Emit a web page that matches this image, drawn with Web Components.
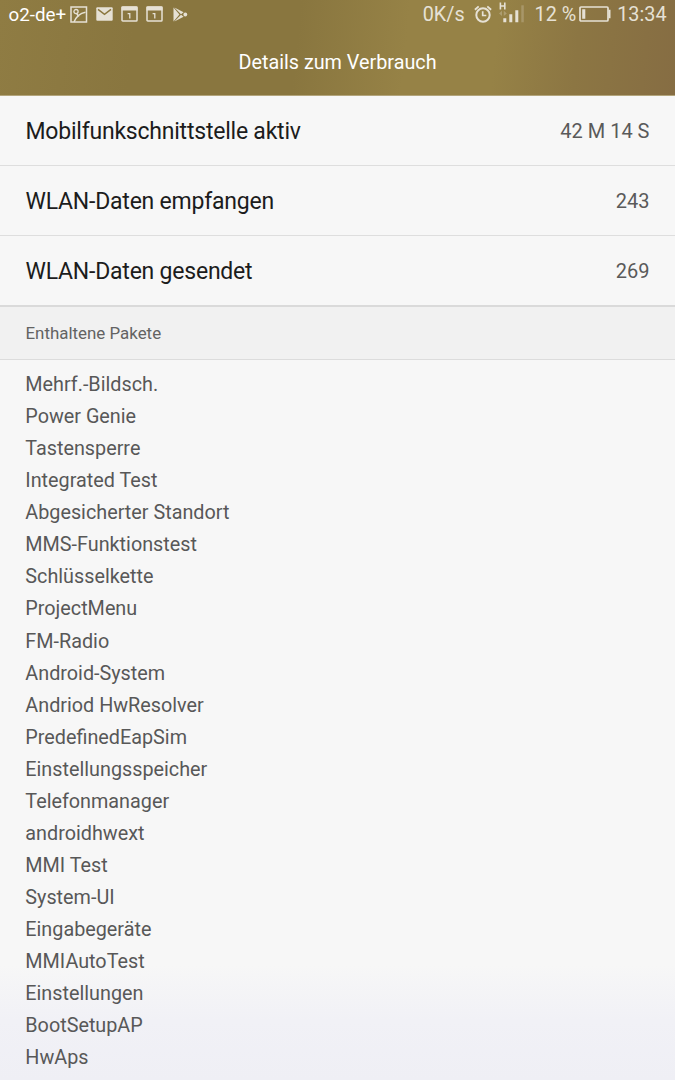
<!DOCTYPE html>
<html lang="de">
<head>
<meta charset="utf-8">
<title>Details zum Verbrauch</title>
<style>
  body {
    margin: 0;
    height: 1080px;
    overflow: hidden;
    font-family: Roboto, "Liberation Sans", sans-serif;
    background: linear-gradient(#f7f7f7 0, #f7f7f7 965px, #f1f1f6 1020px, #efeff5 1080px);
  }
</style>
</head>
<body>
<usage-screen></usage-screen>

<script>
const ICONS = {
  picture: {
    size: [18, 17],
    svg: `<rect x="1" y="1" width="15.5" height="15" fill="none" stroke-width="1.5"/>
      <circle cx="6" cy="5.6" r="2.1" fill="none" stroke-width="1.3"/>
      <path d="M4 16C6 11 9.5 7.3 15.5 6.2M6.8 7.7L8.8 10.6" fill="none" stroke-width="1.5"/>`,
  },
  mail: {
    size: [17, 14],
    svg: `<rect x=".3" y=".3" width="16.4" height="13.4" rx="1" stroke="none"/>
      <path d="M2 2.4L8.5 7.4L15 2.4" fill="none" stroke="#8b783f" stroke-width="1.5"/>`,
  },
  calendar: {
    size: [17, 16],
    svg: `<rect x="1" y="1" width="15" height="14" rx=".8" fill="none" stroke-width="1.5"/>
      <path d="M.5 .5h16v4H.5z" stroke="none"/>
      <path d="M6.6 7.7H8.8V12.6" fill="none" stroke-width="1.3"/>`,
  },
  play: {
    size: [15, 15],
    svg: `<path d="M.5 .5L6.4 7.5L.5 14.5z" stroke="none"/>
      <path d="M1.4 .4L10.6 5.3L8 7.2zM1.4 14.6L10.6 9.7L8 7.8z" stroke="none"/>
      <circle cx="12.3" cy="7.5" r="1.9" stroke="none"/>`,
  },
  alarm: {
    size: [18, 18],
    svg: `<circle cx="9" cy="10" r="6.7" fill="none" stroke-width="2"/>
      <path d="M8.7 6.3v4.2h3.6" fill="none" stroke-width="1.7"/>
      <path d="M.9 4.7L4.7 1.4M17.1 4.7L13.3 1.4" fill="none" stroke-width="1.9"/>`,
  },
  signal: {
    size: [26, 21],
    svg: `<path d="M1.4 .5v7M5.8 .5v7M1.4 4h4.4" fill="none" stroke-width="1.6"/>
      <path d="M0 11.4l3-2.6v5.2zM7.8 11.4l-3-2.6v5.2z" stroke="none" opacity=".3"/>
      <path d="M4.3 16.3h3v4h-3zM10.3 12.3h3v8h-3zM16.3 8.3h3v12h-3z" stroke="none"/>
      <path d="M22.3 3.3h2.5v17h-2.5z" stroke="none" opacity=".25"/>`,
  },
  battery: {
    size: [32, 16],
    svg: `<rect x="1" y="1" width="28" height="14" rx="1" fill="none" stroke-width="1.7"/>
      <path d="M29.5 3.8h2v8.4h-2zM3.2 3.2h3.1v9.6H3.2z" stroke="none"/>`,
  },
};

class StatusIcon extends HTMLElement {
  constructor() {
    super();
    this.showRoot = this.attachShadow({ mode: "open" });
  }

  connectedCallback() {
    const { size, svg } = ICONS[this.getAttribute("name")];
    const [w, h] = size;
    this.showRoot.innerHTML = `<style>
    :host {
        display: block;
        flex: none;
    }
    svg {
        display: block;
        fill: currentColor;
        stroke: currentColor;
    }
    </style>
    <svg width="${w}" height="${h}" viewBox="0 0 ${w} ${h}">${svg}</svg>`;
  }
}

class StatusBar extends HTMLElement {
  constructor() {
    super();
    this.showRoot = this.attachShadow({ mode: "open" });
    this.showRoot.innerHTML = `<style>
    :host {
        display: flex;
        justify-content: space-between;
        height: 28px;
        padding: 0 8.5px;
        font-size: 19.8px;
        line-height: 26px;
        white-space: nowrap;
        color: #e6e1d5;
    }
    div {
        display: flex;
        align-items: center;
    }
    span {
        padding-top: 2px;
    }
    .carrier {
        width: 61.5px;
        font-size: 18.8px;
        color: #fff;
    }
    .notes {
        gap: 8px;
    }
    .notes .last {
        margin-left: 2px;
    }
    .speed { margin-right: 9px; }
    .alarm { margin-right: 7px; }
    .signal { margin: -3px 10px 0 0; }
    .percent { margin-right: 3px; }
    .battery { margin-right: 6px; }
    </style>
    <div>
      <span class="carrier">o2-de+</span>
      <div class="notes">
        <status-icon name="picture"></status-icon>
        <status-icon name="mail"></status-icon>
        <status-icon name="calendar"></status-icon>
        <status-icon name="calendar"></status-icon>
        <status-icon class="last" name="play"></status-icon>
      </div>
    </div>
    <div>
      <span class="speed">0K/s</span>
      <status-icon class="alarm" name="alarm"></status-icon>
      <status-icon class="signal" name="signal"></status-icon>
      <span class="percent">12 %</span>
      <status-icon class="battery" name="battery"></status-icon>
      <span>13:34</span>
    </div>`;
  }
}

class AppHeader extends HTMLElement {
  constructor() {
    super();
    this.showRoot = this.attachShadow({ mode: "open" });
    this.showRoot.innerHTML = `<style>
    :host {
        display: block;
        box-sizing: border-box;
        height: 96px;
        border-bottom: 1px solid #b3a57c;
        background: linear-gradient(96deg, #8f7c43 0%, #89763f 20%, #89763f 44%, #968246 60%, #968246 73%, #8c7643 85%, #866d43 100%);
    }
    h1 {
        margin: 0;
        padding-top: 21px;
        font-size: 19.8px;
        line-height: 28px;
        font-weight: 400;
        text-align: center;
        color: #fff;
    }
    </style>
    <status-bar></status-bar>
    <h1><slot></slot></h1>`;
  }
}

class DetailRow extends HTMLElement {
  constructor() {
    super();
    this.showRoot = this.attachShadow({ mode: "open" });
    this.showRoot.innerHTML = `<style>
    :host {
        display: flex;
        align-items: center;
        justify-content: space-between;
        box-sizing: border-box;
        height: 70px;
        padding: 0 25.5px;
        border-bottom: 1px solid #dedede;
        font-size: 23px;
        letter-spacing: -.22px;
        color: #1c1c1c;
    }
    .label {
        padding-top: 2px;
    }
    .value {
        font-size: 20px;
        letter-spacing: 0;
        color: #5a5a5a;
    }
    </style>
    <span class="label"><slot></slot></span>
    <span class="value"><slot name="value"></slot></span>`;
  }
}

class SectionHeader extends HTMLElement {
  constructor() {
    super();
    this.showRoot = this.attachShadow({ mode: "open" });
    this.showRoot.innerHTML = `<style>
    :host {
        display: flex;
        align-items: center;
        box-sizing: border-box;
        height: 53px;
        padding: 0 25.5px 1px;
        border-bottom: 1px solid #dcdcdc;
        background: #f1f1f1;
        font-size: 16.9px;
        color: #636363;
    }
    </style>
    <slot></slot>`;
  }
}

class PackageList extends HTMLElement {
  constructor() {
    super();
    this.showRoot = this.attachShadow({ mode: "open" });
    this.showRoot.innerHTML = `<style>
    :host {
        display: block;
        padding: 9px 25.3px;
        font-size: 19.8px;
        line-height: 32.06px;
        color: #585858;
    }
    ::slotted(div) {
        white-space: nowrap;
    }
    </style>
    <slot></slot>`;
  }
}

const PACKAGES = [
  "Mehrf.-Bildsch.",
  "Power Genie",
  "Tastensperre",
  "Integrated Test",
  "Abgesicherter Standort",
  "MMS-Funktionstest",
  "Schlüsselkette",
  "ProjectMenu",
  "FM-Radio",
  "Android-System",
  "Andriod HwResolver",
  "PredefinedEapSim",
  "Einstellungsspeicher",
  "Telefonmanager",
  "androidhwext",
  "MMI Test",
  "System-UI",
  "Eingabegeräte",
  "MMIAutoTest",
  "Einstellungen",
  "BootSetupAP",
  "HwAps",
];

class UsageScreen extends HTMLElement {
  constructor() {
    super();
    this.showRoot = this.attachShadow({ mode: "open" });
    this.showRoot.innerHTML = `<style>
    :host {
        display: block;
    }
    .last {
        height: 71px;
        border-bottom: 2px solid #dadada;
    }
    </style>
    <app-header>Details zum Verbrauch</app-header>
    <detail-row>Mobilfunkschnittstelle aktiv<span slot="value">42 M 14 S</span></detail-row>
    <detail-row>WLAN-Daten empfangen<span slot="value">243</span></detail-row>
    <detail-row class="last">WLAN-Daten gesendet<span slot="value">269</span></detail-row>
    <section-header>Enthaltene Pakete</section-header>
    <package-list>${PACKAGES.map((name) => `<div>${name}</div>`).join("")}</package-list>`;
  }
}

window.customElements.define("status-icon", StatusIcon);
window.customElements.define("status-bar", StatusBar);
window.customElements.define("app-header", AppHeader);
window.customElements.define("detail-row", DetailRow);
window.customElements.define("section-header", SectionHeader);
window.customElements.define("package-list", PackageList);
window.customElements.define("usage-screen", UsageScreen);
</script>
</body>
</html>
